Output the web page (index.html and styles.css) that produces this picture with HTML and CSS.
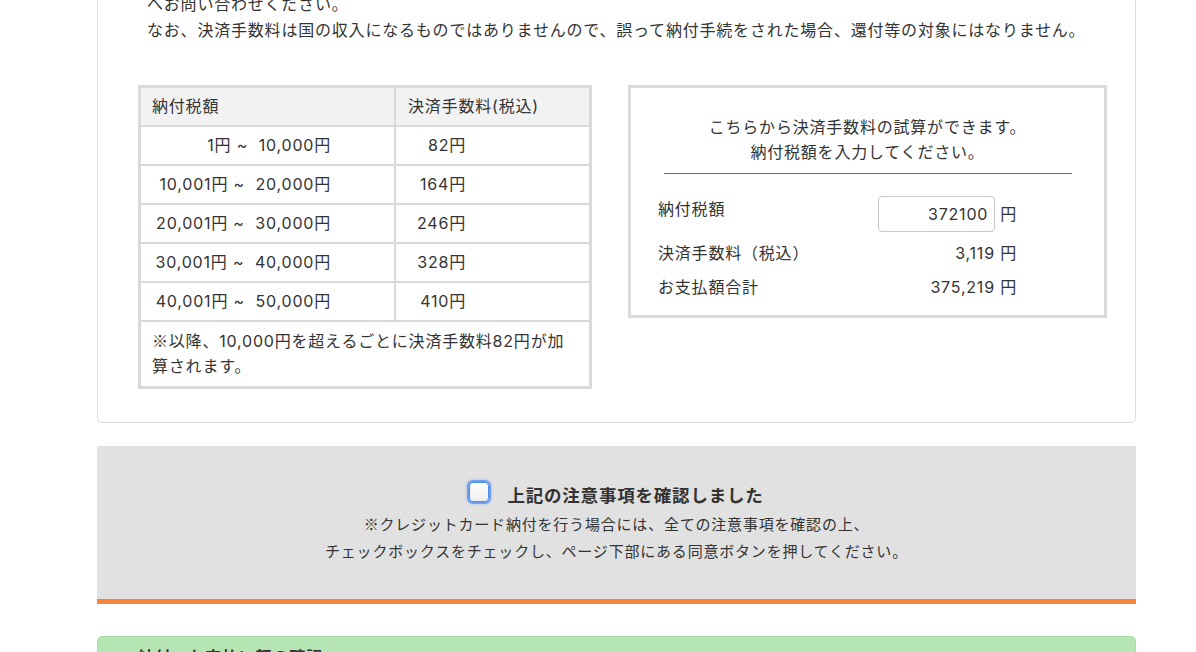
FILE: index.html
```html
<!DOCTYPE html>
<html lang="ja">

<head>
    <meta charset="UTF-8">
    <meta name="viewport" content="width=device-width, initial-scale=1.0">
    <title>クレジットカード納付 決済手数料</title>
    <link rel="stylesheet" href="styles.css">
</head>

<body>
    <div class="wrap">
        <!-- 決済手数料のご案内 -->
        <section class="card">
            <div class="notice">
                <p>へお問い合わせください。</p>
                <p>なお、決済手数料は国の収入になるものではありませんので、誤って納付手続をされた場合、還付等の対象にはなりません。</p>
            </div>

            <div class="fee-area">
                <table class="fee-table">
                    <tr>
                        <th class="col-range">納付税額</th>
                        <th class="col-fee">決済手数料(税込)</th>
                    </tr>
                    <tr>
                        <td><span class="range">1円 ~&nbsp; 10,000円</span></td>
                        <td><span class="fee">82円</span></td>
                    </tr>
                    <tr>
                        <td><span class="range">10,001円 ~&nbsp; 20,000円</span></td>
                        <td><span class="fee">164円</span></td>
                    </tr>
                    <tr>
                        <td><span class="range">20,001円 ~&nbsp; 30,000円</span></td>
                        <td><span class="fee">246円</span></td>
                    </tr>
                    <tr>
                        <td><span class="range">30,001円 ~&nbsp; 40,000円</span></td>
                        <td><span class="fee">328円</span></td>
                    </tr>
                    <tr>
                        <td><span class="range">40,001円 ~&nbsp; 50,000円</span></td>
                        <td><span class="fee">410円</span></td>
                    </tr>
                    <tr>
                        <td class="note" colspan="2"><span class="kome">※</span>以降、10,000円を超えるごとに決済手数料82円が加<br>算されます。</td>
                    </tr>
                </table>

                <div class="calc">
                    <p class="calc-lead">こちらから決済手数料の試算ができます。<br>納付税額を入力してください。</p>
                    <hr class="calc-line">
                    <div class="calc-row top">
                        <span class="calc-label">納付税額</span>
                        <span class="calc-value"><input class="amount" type="text" value="372100"> 円</span>
                    </div>
                    <div class="calc-row">
                        <span class="calc-label">決済手数料（税込）</span>
                        <span class="calc-value" id="fee-out">3,119 円</span>
                    </div>
                    <div class="calc-row">
                        <span class="calc-label">お支払額合計</span>
                        <span class="calc-value" id="total-out">375,219 円</span>
                    </div>
                </div>
            </div>
        </section>

        <!-- 注意事項の確認 -->
        <section class="confirm">
            <label class="confirm-check">
                <span class="checkbox"></span>
                <span class="confirm-title">上記の注意事項を確認しました</span>
            </label>
            <p class="confirm-text"><span class="kome">※</span>クレジットカード納付を行う場合には、全ての注意事項を確認の上、<br>チェックボックスをチェックし、ページ下部にある同意ボタンを押してください。</p>
        </section>

        <section class="next">
            <h2 class="next-title">納付・お支払い額の確認</h2>
        </section>
    </div>
</body>

</html>
```

FILE: styles.css
```css
* {
    margin: 0;
    padding: 0;
    box-sizing: border-box;
}

body {
    background: #fff;
    color: #333;
    font-family: Inter, "Noto Sans CJK JP", "Noto Sans", sans-serif;
    font-size: 16px;
    letter-spacing: 0.05em;
    line-height: 1.6;
    overflow: hidden;
}

/* reference mark drawn from the Japanese font */
.kome {
    font-family: "Noto Sans CJK JP", sans-serif;
    line-height: 1;
}

.wrap {
    width: 1039px;
    margin-left: 97px;
}

/* card (top is scrolled out of view) */
.card {
    margin-top: -42px;
    padding: 32px 28px 33px 40px;
    border: 1px solid #dcdcdc;
    border-radius: 5px;
}

.notice {
    padding-left: 9px;
    line-height: 26px;
}

.fee-area {
    display: flex;
    align-items: flex-start;
    gap: 36px;
    margin-top: 42px;
}

/* fee table */
.fee-table {
    width: 454px;
    border-collapse: separate;
    border-spacing: 0;
    border: 2px solid #d9d9d9;
}

.fee-table th,
.fee-table td {
    border: 1px solid #d9d9d9;
    height: 39px;
    padding: 0 11px;
    text-align: left;
    font-weight: normal;
    line-height: 25px;
}

.fee-table th {
    background: #f2f2f2;
}

.col-range {
    width: 255px;
}

.col-fee {
    width: 195px;
}

.fee-table th.col-fee,
.fee-table td + td {
    padding-left: 12px;
}

.range {
    display: inline-block;
    width: 179px;
    text-align: right;
}

.fee {
    display: inline-block;
    width: 58px;
    text-align: right;
}

.fee-table td.note {
    height: 66px;
    padding: 7px 11px;
}

/* calculator */
.calc {
    width: 479px;
    border: 3px solid #dadada;
    padding: 27px 27px 15px 27px;
}

.calc-lead {
    text-align: center;
    line-height: 25px;
}

.calc-line {
    width: 408px;
    margin: 8px auto 22px;
    border: none;
    border-top: 1px solid #5d6b80;
}

.calc-row {
    display: flex;
    justify-content: space-between;
    align-items: center;
    width: 359px;
    line-height: 26px;
    margin-bottom: 8px;
}

.calc-row.top {
    align-items: flex-start;
}

.calc-row.top .calc-value {
    display: flex;
    align-items: center;
    gap: 5px;
    height: 36px;
}

.calc-row:last-child {
    margin-bottom: 0;
}

.calc-value {
    text-align: right;
}

.amount {
    width: 117px;
    height: 36px;
    padding: 0 6px;
    border: 1px solid #c8c8c8;
    border-radius: 4px;
    font: inherit;
    letter-spacing: inherit;
    color: #333;
    text-align: right;
}

/* confirmation */
.confirm {
    margin-top: 23px;
    padding: 36px 0 34px;
    background: #e1e1e1;
    border-bottom: 5px solid #f7843a;
    text-align: center;
}

.confirm-check {
    display: inline-flex;
    align-items: center;
    gap: 18px;
}

.checkbox {
    width: 20px;
    height: 20px;
    margin-top: -9px;
    border: 1px solid #4f8fee;
    border-radius: 4px;
    background: linear-gradient(#ffffff, #eeeeee);
    box-shadow: 0 0 0 2px rgba(84, 146, 240, 0.75), 0 0 3px 2px rgba(84, 146, 240, 0.45);
}

.confirm-title {
    font-size: 17.5px;
    font-weight: bold;
    line-height: 28px;
}

.confirm-text {
    font-size: 15px;
    line-height: 27px;
    margin-top: 1px;
}

/* next step */
.next {
    margin-top: 32px;
    height: 80px;
    padding: 8px 40px;
    background: #b6e5b4;
    border: 1px solid #a9dca7;
    border-radius: 5px 5px 0 0;
}

.next-title {
    font-size: 16px;
    font-weight: bold;
}
```
